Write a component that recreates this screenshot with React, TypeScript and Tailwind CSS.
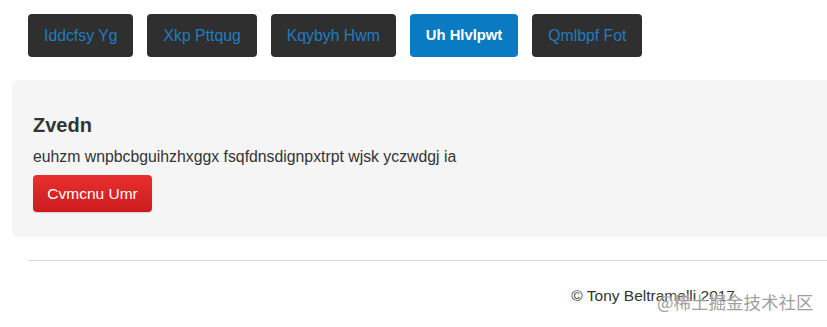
const tabs = ["Iddcfsy Yg", "Xkp Pttqug", "Kqybyh Hwm", "Uh Hlvlpwt", "Qmlbpf Fot"];

export default function App() {
  return (
    <div className="relative w-[827px] h-[327px] overflow-hidden bg-white font-['Liberation_Sans',Arial,sans-serif] text-[#333]">
      <nav className="flex gap-[14px] pl-[28px] pt-[14px]">
        {tabs.map((t, i) => (
          <button
            key={t}
            className={
              i === 3
                ? "h-[43px] px-[16px] rounded-[4px] bg-[#0a7bc2] text-white text-[14.8px] font-bold"
                : "h-[43px] px-[16px] rounded-[4px] bg-[#2f2f2f] text-[#1f7cc4] text-[15.8px]"
            }
          >
            {t}
          </button>
        ))}
      </nav>

      <section className="ml-[12px] mt-[23px] h-[157px] rounded-l-[6px] bg-[#f5f5f5] pl-[21px] pt-[33px]">
        <h2 className="text-[20px] leading-[24px] font-bold text-[#333]">Zvedn</h2>
        <p className="mt-[10px] text-[15.8px] leading-[20px] text-[#333]">
          euhzm wnpbcbguihzhxggx fsqfdnsdignpxtrpt wjsk yczwdgj ia
        </p>
        <button className="mt-[8px] h-[37px] w-[119px] rounded-[4px] bg-gradient-to-b from-[#e8302e] to-[#cd1a1e] text-white text-[15.5px] shadow-[0_1px_1px_rgba(0,0,0,0.15)]">
          Cvmcnu Umr
        </button>
      </section>

      <hr className="ml-[28px] mt-[23px] border-t border-[#d8d8d8]" />

      <footer className="flex justify-end pr-[92px] pt-[23px] text-[15.5px] text-[#333]">
        © Tony Beltramelli 2017
      </footer>

      <div className="absolute left-[657px] top-[291px] text-[17.5px] leading-[22px] text-[#a0a0a0] font-['Noto_Sans_CJK_SC',sans-serif] [text-shadow:0_0_2px_#fff]">
        @稀土掘金技术社区
      </div>
    </div>
  );
}
